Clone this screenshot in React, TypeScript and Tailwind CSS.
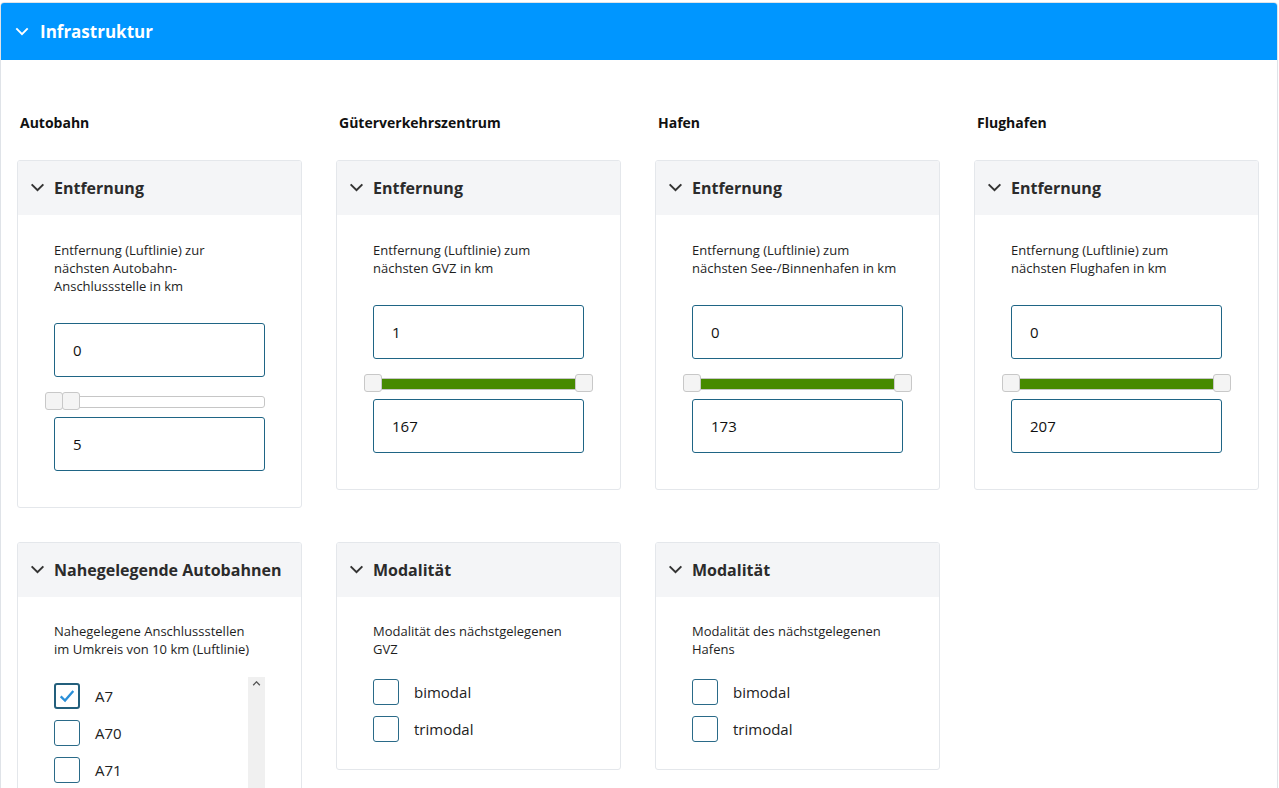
import { useState } from "react";

type Range = { min: number; max: number; from: number; to: number };

type DistanceFilter = {
  title: string;
  lines: string[];
  range: Range;
};

type CheckFilter = {
  title: string;
  lines: string[];
  options: { label: string; checked: boolean }[];
  scroll?: boolean;
};

type Column = {
  heading: string;
  distance: DistanceFilter;
  extra?: CheckFilter;
};

const columns: Column[] = [
  {
    heading: "Autobahn",
    distance: {
      title: "Entfernung",
      lines: ["Entfernung (Luftlinie) zur", "nächsten Autobahn-", "Anschlussstelle in km"],
      range: { min: 0, max: 62, from: 0, to: 5 },
    },
    extra: {
      title: "Nahegelegende Autobahnen",
      lines: ["Nahegelegene Anschlussstellen", "im Umkreis von 10 km (Luftlinie)"],
      options: [
        { label: "A7", checked: true },
        { label: "A70", checked: false },
        { label: "A71", checked: false },
        { label: "A73", checked: false },
      ],
      scroll: true,
    },
  },
  {
    heading: "Güterverkehrszentrum",
    distance: {
      title: "Entfernung",
      lines: ["Entfernung (Luftlinie) zum", "nächsten GVZ in km"],
      range: { min: 1, max: 167, from: 1, to: 167 },
    },
    extra: {
      title: "Modalität",
      lines: ["Modalität des nächstgelegenen", "GVZ"],
      options: [
        { label: "bimodal", checked: false },
        { label: "trimodal", checked: false },
      ],
    },
  },
  {
    heading: "Hafen",
    distance: {
      title: "Entfernung",
      lines: ["Entfernung (Luftlinie) zum", "nächsten See-/Binnenhafen in km"],
      range: { min: 0, max: 173, from: 0, to: 173 },
    },
    extra: {
      title: "Modalität",
      lines: ["Modalität des nächstgelegenen", "Hafens"],
      options: [
        { label: "bimodal", checked: false },
        { label: "trimodal", checked: false },
      ],
    },
  },
  {
    heading: "Flughafen",
    distance: {
      title: "Entfernung",
      lines: ["Entfernung (Luftlinie) zum", "nächsten Flughafen in km"],
      range: { min: 0, max: 207, from: 0, to: 207 },
    },
  },
];

function Chevron({ className }: { className?: string }) {
  return (
    <svg viewBox="0 0 16 10" className={className} fill="none">
      <path d="M1.5 1.5 8 8l6.5-6.5" stroke="currentColor" strokeWidth="2.2" />
    </svg>
  );
}

function CardHeader({ title }: { title: string }) {
  return (
    <div className="flex h-[54px] items-center bg-[#f4f5f7] pb-[1px] pl-[12px]">
      <Chevron className="h-[9px] w-[15px] text-[#333]" />
      <span className="pl-[9px] text-[16px] font-bold text-[#2b2b2b]">{title}</span>
    </div>
  );
}

function Description({ lines }: { lines: string[] }) {
  return (
    <p className="text-[13px] leading-[18px] text-[#1e1e1e]">
      {lines.map((l, i) => (
        <span key={i} className="block whitespace-nowrap">
          {l}
        </span>
      ))}
    </p>
  );
}

function NumberBox({ value }: { value: number }) {
  return (
    <div className="flex h-[54px] w-[211px] items-center rounded-[3px] border border-[#1f6585] pl-[18px] text-[15px] text-[#111]">
      {value}
    </div>
  );
}

function RangeSlider({ range }: { range: Range }) {
  const pct = (v: number) => ((v - range.min) / (range.max - range.min)) * 100;
  const a = pct(range.from);
  const b = pct(range.to);
  return (
    <div className="relative h-[40px] w-[211px]">
      <div className="absolute left-[-8px] right-0 top-[19px] h-[12px] rounded-[3px] border border-[#c6c6c6] bg-white" />
      <div
        className="absolute top-[20px] h-[10px] bg-[#468a00]"
        style={{ left: `${a}%`, width: `${b - a}%` }}
      />
      {[a, b].map((p, i) => (
        <div
          key={i}
          className="absolute top-[15px] h-[18px] w-[18px] -translate-x-1/2 rounded-[3px] border border-[#c8c8c8] bg-[#f4f4f4]"
          style={{ left: `${p}%` }}
        />
      ))}
    </div>
  );
}

function DistanceCard({ f }: { f: DistanceFilter }) {
  return (
    <div className="overflow-hidden rounded-[3px] border border-[#e4e7eb] bg-white">
      <CardHeader title={f.title} />
      <div className="pl-[36px] pt-[26px] pb-[36px]">
        <Description lines={f.lines} />
        <div className="mt-[28px]">
          <NumberBox value={f.range.from} />
          <RangeSlider range={f.range} />
          <NumberBox value={f.range.to} />
        </div>
      </div>
    </div>
  );
}

function Checkbox({ label, checked }: { label: string; checked: boolean }) {
  const [on, setOn] = useState(checked);
  return (
    <label className="flex h-[26px] cursor-pointer items-center gap-[15px]" onClick={() => setOn(!on)}>
      <span
        className={`flex h-[26px] w-[26px] items-center justify-center rounded-[3px] border ${
          on ? "border-2 border-[#235f7c]" : "border-[#2a6a88]"
        }`}
      >
        {on && (
          <svg viewBox="0 0 20 20" className="h-[18px] w-[18px]" fill="none">
            <path d="M3 10.5 7.8 15 17 4.5" stroke="#2a8fd8" strokeWidth="2.6" />
          </svg>
        )}
      </span>
      <span className="text-[15px] text-[#222]">{label}</span>
    </label>
  );
}

function CheckCard({ f }: { f: CheckFilter }) {
  return (
    <div className="overflow-hidden rounded-[3px] border border-[#e4e7eb] bg-white">
      <CardHeader title={f.title} />
      <div className="pl-[36px] pt-[25px] pb-[27px]">
        <Description lines={f.lines} />
        {f.scroll ? (
          <div className="mt-[19px] flex h-[140px] w-[211px]">
            <div className="flex flex-1 flex-col gap-[11px] pt-[6px]">
              {f.options.map((o) => (
                <Checkbox key={o.label} label={o.label} checked={o.checked} />
              ))}
            </div>
            <div className="flex w-[17px] justify-center bg-[#f0f0f0] pt-[4px]">
              <svg viewBox="0 0 10 6" className="h-[5px] w-[9px]" fill="none">
                <path d="M1 5 5 1l4 4" stroke="#555" strokeWidth="1.6" />
              </svg>
            </div>
          </div>
        ) : (
          <div className="mt-[21px] flex flex-col gap-[11px]">
            {f.options.map((o) => (
              <Checkbox key={o.label} label={o.label} checked={o.checked} />
            ))}
          </div>
        )}
      </div>
    </div>
  );
}

export default function App() {
  return (
    <div className="h-[788px] w-[1279px] overflow-hidden bg-white pt-[2px] font-['Open_Sans','Noto_Sans',sans-serif]">
      <div className="mr-[1px] h-[800px] rounded-t-[4px] border border-[#dfe3e8]">
        <div className="flex h-[57px] items-center rounded-t-[3px] bg-[#0096ff] pl-[14px]">
          <Chevron className="h-[9px] w-[14px] text-white" />
          <h1 className="pl-[11px] text-[17px] font-bold text-white">Infrastruktur</h1>
        </div>

        <div className="grid grid-cols-[285px_285px_285px_285px] items-start gap-x-[34px] gap-y-[34px] pl-[16px] pt-[52px]">
          {columns.map((c) => (
            <div key={c.heading} className="-mb-[34px] pl-[3px] text-[14px] leading-[22px] font-bold text-[#111]">
              <div className="mb-[26px]">{c.heading}</div>
            </div>
          ))}
          {columns.map((c) => (
            <DistanceCard key={c.heading} f={c.distance} />
          ))}
          {columns.map((c) =>
            c.extra ? <CheckCard key={c.heading} f={c.extra} /> : <div key={c.heading} />
          )}
        </div>
      </div>
    </div>
  );
}
